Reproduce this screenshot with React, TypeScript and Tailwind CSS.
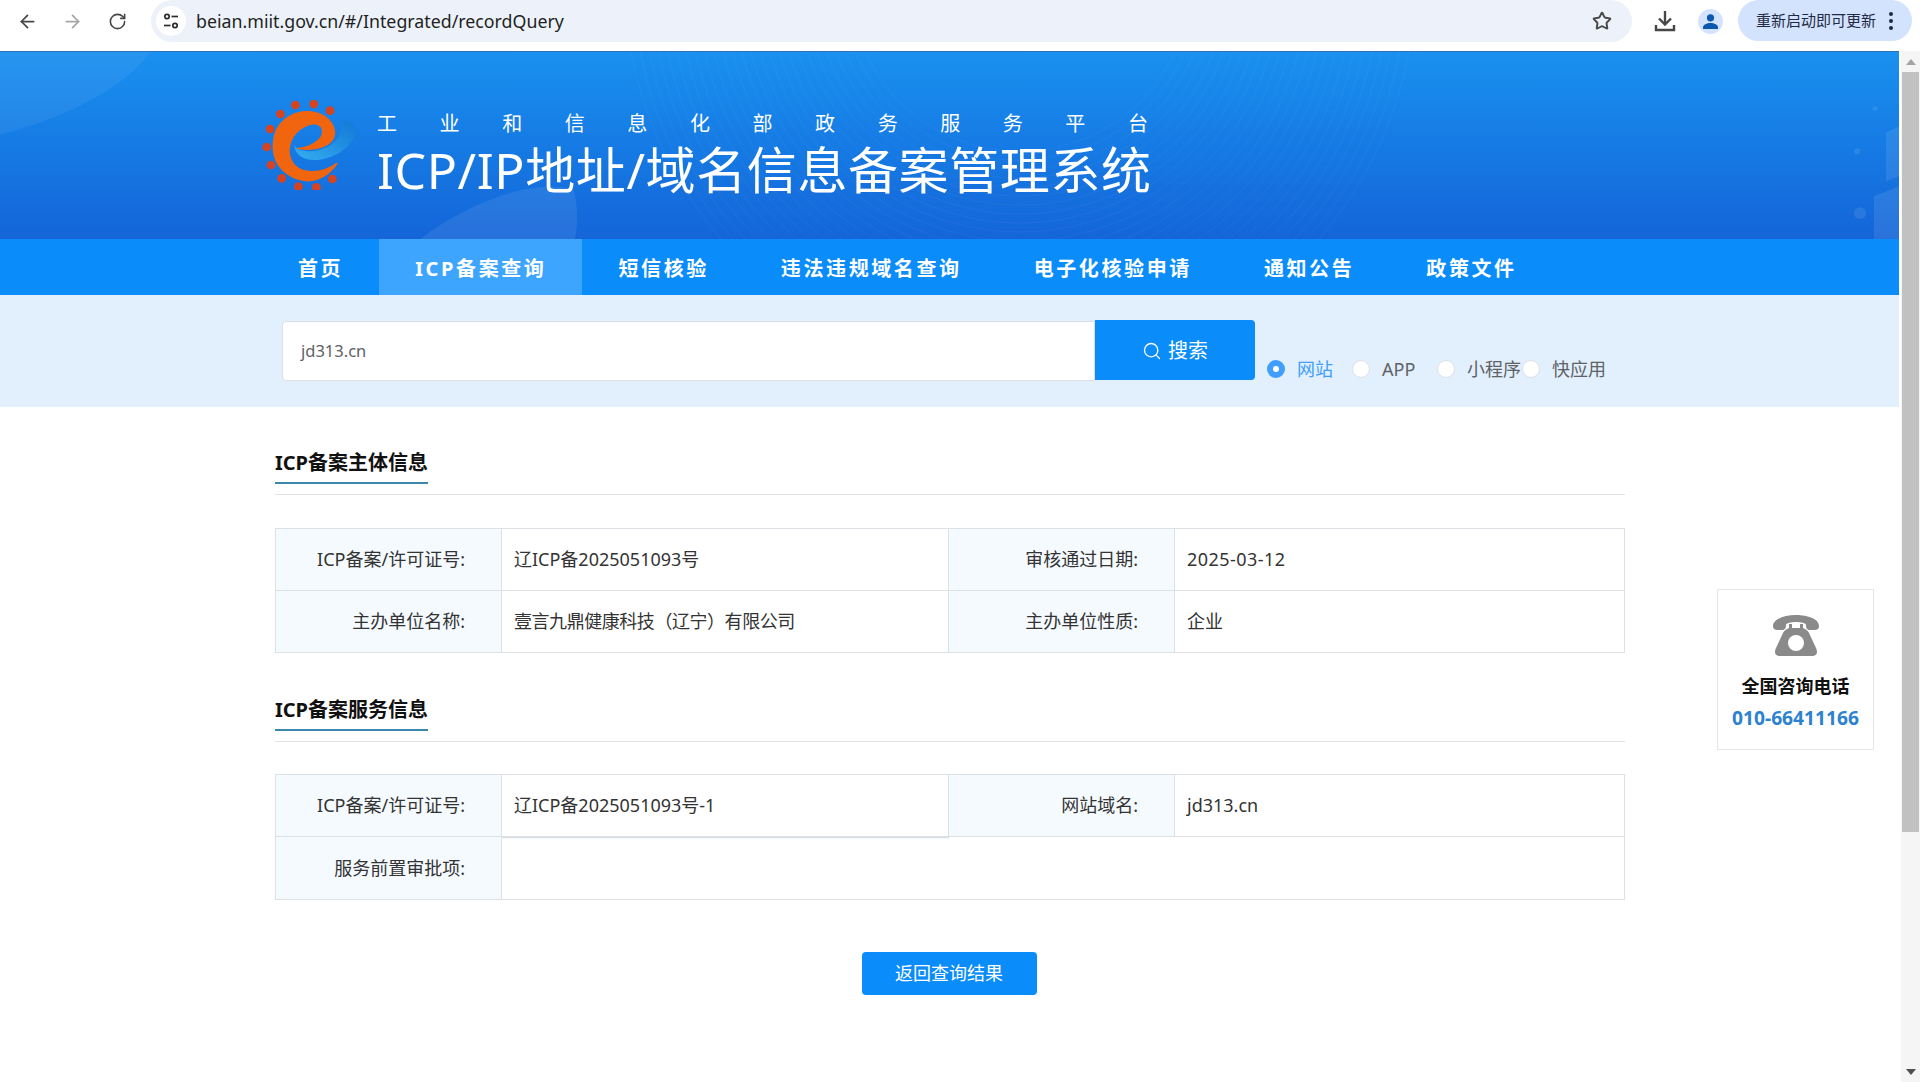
import { ArrowLeft, ArrowRight, RotateCw, Search, Star } from 'lucide-react'

const NAV_ITEMS = [
  { label: '首页', active: false },
  { label: 'ICP备案查询', active: true },
  { label: '短信核验', active: false },
  { label: '违法违规域名查询', active: false },
  { label: '电子化核验申请', active: false },
  { label: '通知公告', active: false },
  { label: '政策文件', active: false },
]

const RADIOS = [
  { label: '网站', checked: true, className: 'w-[85px]' },
  { label: 'APP', checked: false, className: 'w-[85px]' },
  { label: '小程序', checked: false, className: 'w-[85px]' },
  { label: '快应用', checked: false, className: '' },
]

function BrowserBar() {
  return (
    <div className="flex h-[51px] shrink-0 items-start bg-white">
      <div className="flex h-[42px] w-[151px] shrink-0 items-center pl-[17px] text-[#474747]">
        <ArrowLeft size={21} strokeWidth={2} />
        <ArrowRight size={21} strokeWidth={2} className="ml-[24px] text-[#a6a6a6]" />
        <RotateCw size={19} strokeWidth={2} className="ml-[25px]" />
      </div>
      <div className="flex h-[42px] w-[1481px] items-center rounded-[21px] bg-[#edf2fa] pl-[5px] pr-[20px]">
        <div className="flex h-[30px] w-[30px] items-center justify-center rounded-full bg-white">
          <svg width="18" height="18" viewBox="0 0 18 18" fill="none" stroke="#2b2b2b" strokeWidth="1.7">
            <circle cx="5" cy="4.5" r="2.2" />
            <path d="M9.5 4.5H16" />
            <circle cx="13" cy="13.5" r="2.2" />
            <path d="M2 13.5h6.5" />
          </svg>
        </div>
        <span className="ml-[10px] text-[17.8px] text-[#1f1f1f]">beian.miit.gov.cn/#/Integrated/recordQuery</span>
        <Star size={20} strokeWidth={2.3} className="ml-auto text-[#474747]" />
      </div>
      <div className="flex h-[42px] w-[44px] shrink-0 items-center justify-end">
        <svg width="22" height="22" viewBox="0 0 22 22" fill="none" stroke="#474747" strokeWidth="2.4">
          <path d="M11 1v13" />
          <path d="M5 8.5l6 6 6-6" />
          <path d="M2 15v5h18v-5" />
        </svg>
      </div>
      <div className="flex h-[42px] w-[62px] shrink-0 items-center pl-[22px]">
        <div className="flex h-[25px] w-[25px] items-center justify-center rounded-full bg-[#d3e3fd]">
          <svg width="17" height="17" viewBox="0 0 17 17" fill="#0b57b0">
            <circle cx="8.5" cy="4.8" r="3.6" />
            <path d="M1 16v-1.6C1 11.6 5 10 8.5 10s7.5 1.6 7.5 4.4V16z" />
          </svg>
        </div>
      </div>
      <div className="flex h-[41px] w-[174px] shrink-0 items-center rounded-[21px] bg-[#d3e3fd] pl-[18px]">
        <span className="text-[15px] text-[#1f2a44]">重新启动即可更新</span>
        <svg className="ml-[12px]" width="6" height="20" viewBox="0 0 6 20" fill="#1f2a44">
          <circle cx="3" cy="3" r="2" />
          <circle cx="3" cy="10" r="2" />
          <circle cx="3" cy="17" r="2" />
        </svg>
      </div>
    </div>
  )
}

function Logo() {
  const dots = [
    [163, 75], [218, 72], [267, 92], [118, 102], [87, 147], [77, 201],
    [90, 255], [122, 295], [172, 320], [226, 322], [274, 297],
  ]
  return (
    <svg width="97" height="90" viewBox="60 60 291 270" className="shrink-0">
      <defs>
        <linearGradient id="swoosh" x1="0" y1="1" x2="1" y2="0">
          <stop offset="0" stopColor="#35aef0" />
          <stop offset="1" stopColor="#1278d6" />
        </linearGradient>
      </defs>
      {dots.map(([cx, cy]) => (
        <circle key={`${cx}-${cy}`} cx={cx} cy={cy} r="13" fill="#d8431f" />
      ))}
      <path
        d="M300 122C325 120 350 140 343 160C335 195 290 235 230 240C190 243 160 225 160 195C170 215 215 220 250 205C290 190 310 150 300 122Z"
        fill="url(#swoosh)"
      />
      <path
        d="M288 250C255 300 205 310 170 297C120 280 93 240 97 190C100 130 150 92 205 95C250 97 285 130 280 165C275 195 230 215 170 205C205 205 245 180 245 155C245 130 215 125 190 140C150 160 135 205 150 240C170 285 240 285 288 250Z"
        fill="#f2650f"
        stroke="#f2650f"
        strokeWidth="4"
        strokeLinejoin="round"
      />
    </svg>
  )
}

function HeaderBackdrop() {
  const rings = Array.from({ length: 26 }, (_, i) => i)
  return (
    <svg className="absolute inset-0 h-full w-full" viewBox="0 0 1899 188" preserveAspectRatio="none">
      <path d="M0 83C70 65 125 35 150 0H0Z" fill="#ffffff" fillOpacity="0.06" />
      <path d="M420 188C450 165 490 145 525 138C550 134 570 135 574 140C578 155 578 175 575 188Z" fill="#ffffff" fillOpacity="0.08" />
      {rings.map((i) => (
        <circle key={i} cx="1020" cy="-70" r={170 + i * 9} fill="none" stroke="#ffffff" strokeOpacity="0.045" strokeWidth="1" />
      ))}
      <g fill="#ffffff" fillOpacity="0.09">
        <path d="M1874 188V145l25-10v53z" />
        <path d="M1886 130l13-5v-50l-13 6z" />
        <circle cx="1860" cy="162" r="6" />
        <circle cx="1857" cy="100" r="3" />
        <circle cx="1875" cy="57" r="2.5" />
      </g>
    </svg>
  )
}

function Header() {
  return (
    <div className="relative flex h-[188px] shrink-0 items-start overflow-hidden border-t border-[#2f6fb5] bg-gradient-to-b from-[#1a90f0] to-[#1565d8] pl-[261px] pt-[48px]">
      <HeaderBackdrop />
      <div className="relative flex items-start">
        <Logo />
        <div className="ml-[19px] text-white">
          <div className="mt-[11px] flex w-[771px] justify-between text-[20px] leading-[26px]">
            {'工业和信息化部政务服务平台'.split('').map((char, i) => (
              <span key={i}>{char}</span>
            ))}
          </div>
          <div className="mt-[7px] whitespace-nowrap text-[50px] leading-[52px] tracking-[0.6px]">
            ICP/IP地址/域名信息备案管理系统
          </div>
        </div>
      </div>
    </div>
  )
}

function NavBar() {
  return (
    <div className="flex h-[56px] shrink-0 bg-[#0a8cfa] pl-[262px]">
      {NAV_ITEMS.map((item) => (
        <div
          key={item.label}
          className={`flex h-full items-center px-[36px] pt-[3px] text-[20px] font-bold tracking-[2.6px] text-white ${
            item.active ? 'bg-[#3ea5ff]' : ''
          }`}
        >
          {item.label}
        </div>
      ))}
    </div>
  )
}

function SearchBand() {
  return (
    <div className="flex h-[112px] shrink-0 items-start bg-[#e2f0fd] pl-[282px] pt-[25px]">
      <div className="mt-[1px] flex h-[60px] w-[813px] items-center rounded-l-[4px] border border-[#dcdfe6] bg-white pl-[18px] text-[16.5px] text-[#606266]">
        jd313.cn
      </div>
      <button className="flex h-[60px] w-[160px] items-center justify-center gap-[6px] rounded-r-[4px] bg-[#0a8cfa] pt-[1px] text-[20px] text-white">
        <Search size={20} strokeWidth={1.6} />
        搜索
      </button>
      <div className="ml-[12px] mt-[36px] flex items-center text-[18px] text-[#606266]">
        {RADIOS.map((radio) => (
          <div key={radio.label} className={`flex items-center ${radio.className}`}>
            <span
              className={`flex h-[18px] w-[18px] items-center justify-center rounded-full ${
                radio.checked ? 'bg-[#409eff]' : 'border border-[#dcdfe6] bg-white'
              }`}
            >
              {radio.checked && <span className="h-[6px] w-[6px] rounded-full bg-white" />}
            </span>
            <span className={`ml-[12px] leading-[26px] ${radio.checked ? 'text-[#409eff]' : ''}`}>{radio.label}</span>
          </div>
        ))}
      </div>
    </div>
  )
}

function SectionTitle({ title }: { title: string }) {
  return (
    <div className="h-[57px] border-b border-[#e0e3e6]">
      <div className="inline-block h-[46px] border-b-2 border-[#3b87ad] pt-[10px] text-[20px] font-bold leading-[30px] text-[#111]">
        {title}
      </div>
    </div>
  )
}

function Label({ children, last }: { children: string; last?: boolean }) {
  return (
    <div className={`flex items-center justify-end border-r border-[#dde1e6] bg-[#f5faff] pr-[36px] ${last ? '' : 'border-b'}`}>
      {children}
    </div>
  )
}

function Value({ children, last, raised, className = '' }: { children?: string; last?: boolean; raised?: boolean; className?: string }) {
  return (
    <div
      className={`flex items-center border-r border-[#dde1e6] pl-[12px] ${last ? '' : 'border-b'} ${
        raised ? 'shadow-[0_1px_1px_#d5dde5]' : ''
      } ${className}`}
    >
      {children}
    </div>
  )
}

function MainContent() {
  return (
    <div className="ml-[275px] w-[1350px] text-[18px] text-[#333]">
      <div className="pt-[31px]">
        <SectionTitle title="ICP备案主体信息" />
      </div>
      <div className="mt-[33px] grid h-[125px] grid-cols-[226px_447px_226px_1fr] grid-rows-2 border border-[#dde1e6]">
        <Label>ICP备案/许可证号:</Label>
        <Value>辽ICP备2025051093号</Value>
        <Label>审核通过日期:</Label>
        <Value className="border-r-0 tracking-[0.45px]">2025-03-12</Value>
        <Label last>主办单位名称:</Label>
        <Value last className="tracking-[-0.45px]">壹言九鼎健康科技（辽宁）有限公司</Value>
        <Label last>主办单位性质:</Label>
        <Value last className="border-r-0">企业</Value>
      </div>
      <div className="pt-[32px]">
        <SectionTitle title="ICP备案服务信息" />
      </div>
      <div className="mt-[32px] grid h-[126px] grid-cols-[226px_447px_226px_1fr] grid-rows-2 border border-[#dde1e6]">
        <Label>ICP备案/许可证号:</Label>
        <Value raised>辽ICP备2025051093号-1</Value>
        <Label>网站域名:</Label>
        <Value className="border-r-0">jd313.cn</Value>
        <Label last>服务前置审批项:</Label>
        <div className="col-span-3" />
      </div>
      <div className="mt-[52px] flex justify-center pr-[2px]">
        <button className="h-[43px] w-[175px] rounded-[4px] bg-[#0a8cfa] text-[18px] text-white">返回查询结果</button>
      </div>
    </div>
  )
}

function ContactCard() {
  return (
    <div className="absolute right-[46px] top-[538px] flex h-[161px] w-[157px] flex-col items-center border border-[#e4e6e8] bg-white">
      <svg className="mt-[25px]" width="48" height="42" viewBox="0 0 48 42" fill="#8a8a8a">
        <path d="M1 11C1 4 12 0 24 0s23 4 23 11c0 3-2 4-5 4h-4c-3 0-4-2-4-5 0-2-5-3-10-3s-10 1-10 3c0 3-1 5-4 5H6c-3 0-5-1-5-4z" />
        <path d="M17 9h3v4h8V9h3v4c3 1 5 3 6 5l7 15c2 4 1 8-3 8H7c-4 0-5-4-3-8l7-15c1-2 3-4 6-5z" />
        <circle cx="24" cy="28" r="8" fill="#ffffff" />
      </svg>
      <div className="mt-[16px] text-[18px] font-bold leading-[26px] text-[#111]">全国咨询电话</div>
      <div className="mt-[6px] text-[19.2px] font-bold leading-[26px] text-[#2d82d0]">010-66411166</div>
    </div>
  )
}

function Scrollbar() {
  return (
    <div className="flex w-[21px] shrink-0 flex-col items-center border-l-2 border-white bg-[#f5f5f5]">
      <div className="flex h-[21px] shrink-0 items-center justify-center">
        <span className="h-0 w-0 border-x-[5px] border-b-[6px] border-x-transparent border-b-[#a3a3a3]" />
      </div>
      <div className="h-[760px] w-[17px] shrink-0 bg-[#c1c1c1]" />
      <div className="mt-auto flex h-[21px] shrink-0 items-center justify-center">
        <span className="h-0 w-0 border-x-[5px] border-t-[6px] border-x-transparent border-t-[#505050]" />
      </div>
    </div>
  )
}

export default function App() {
  return (
    <div
      className="flex h-[1082px] flex-col overflow-hidden bg-white"
      style={{ fontFamily: '"Noto Sans", "Noto Sans CJK SC", sans-serif' }}
    >
      <BrowserBar />
      <div className="relative flex min-h-0 flex-1">
        <div className="min-w-0 flex-1">
          <Header />
          <NavBar />
          <SearchBand />
          <MainContent />
        </div>
        <Scrollbar />
        <ContactCard />
      </div>
    </div>
  )
}
